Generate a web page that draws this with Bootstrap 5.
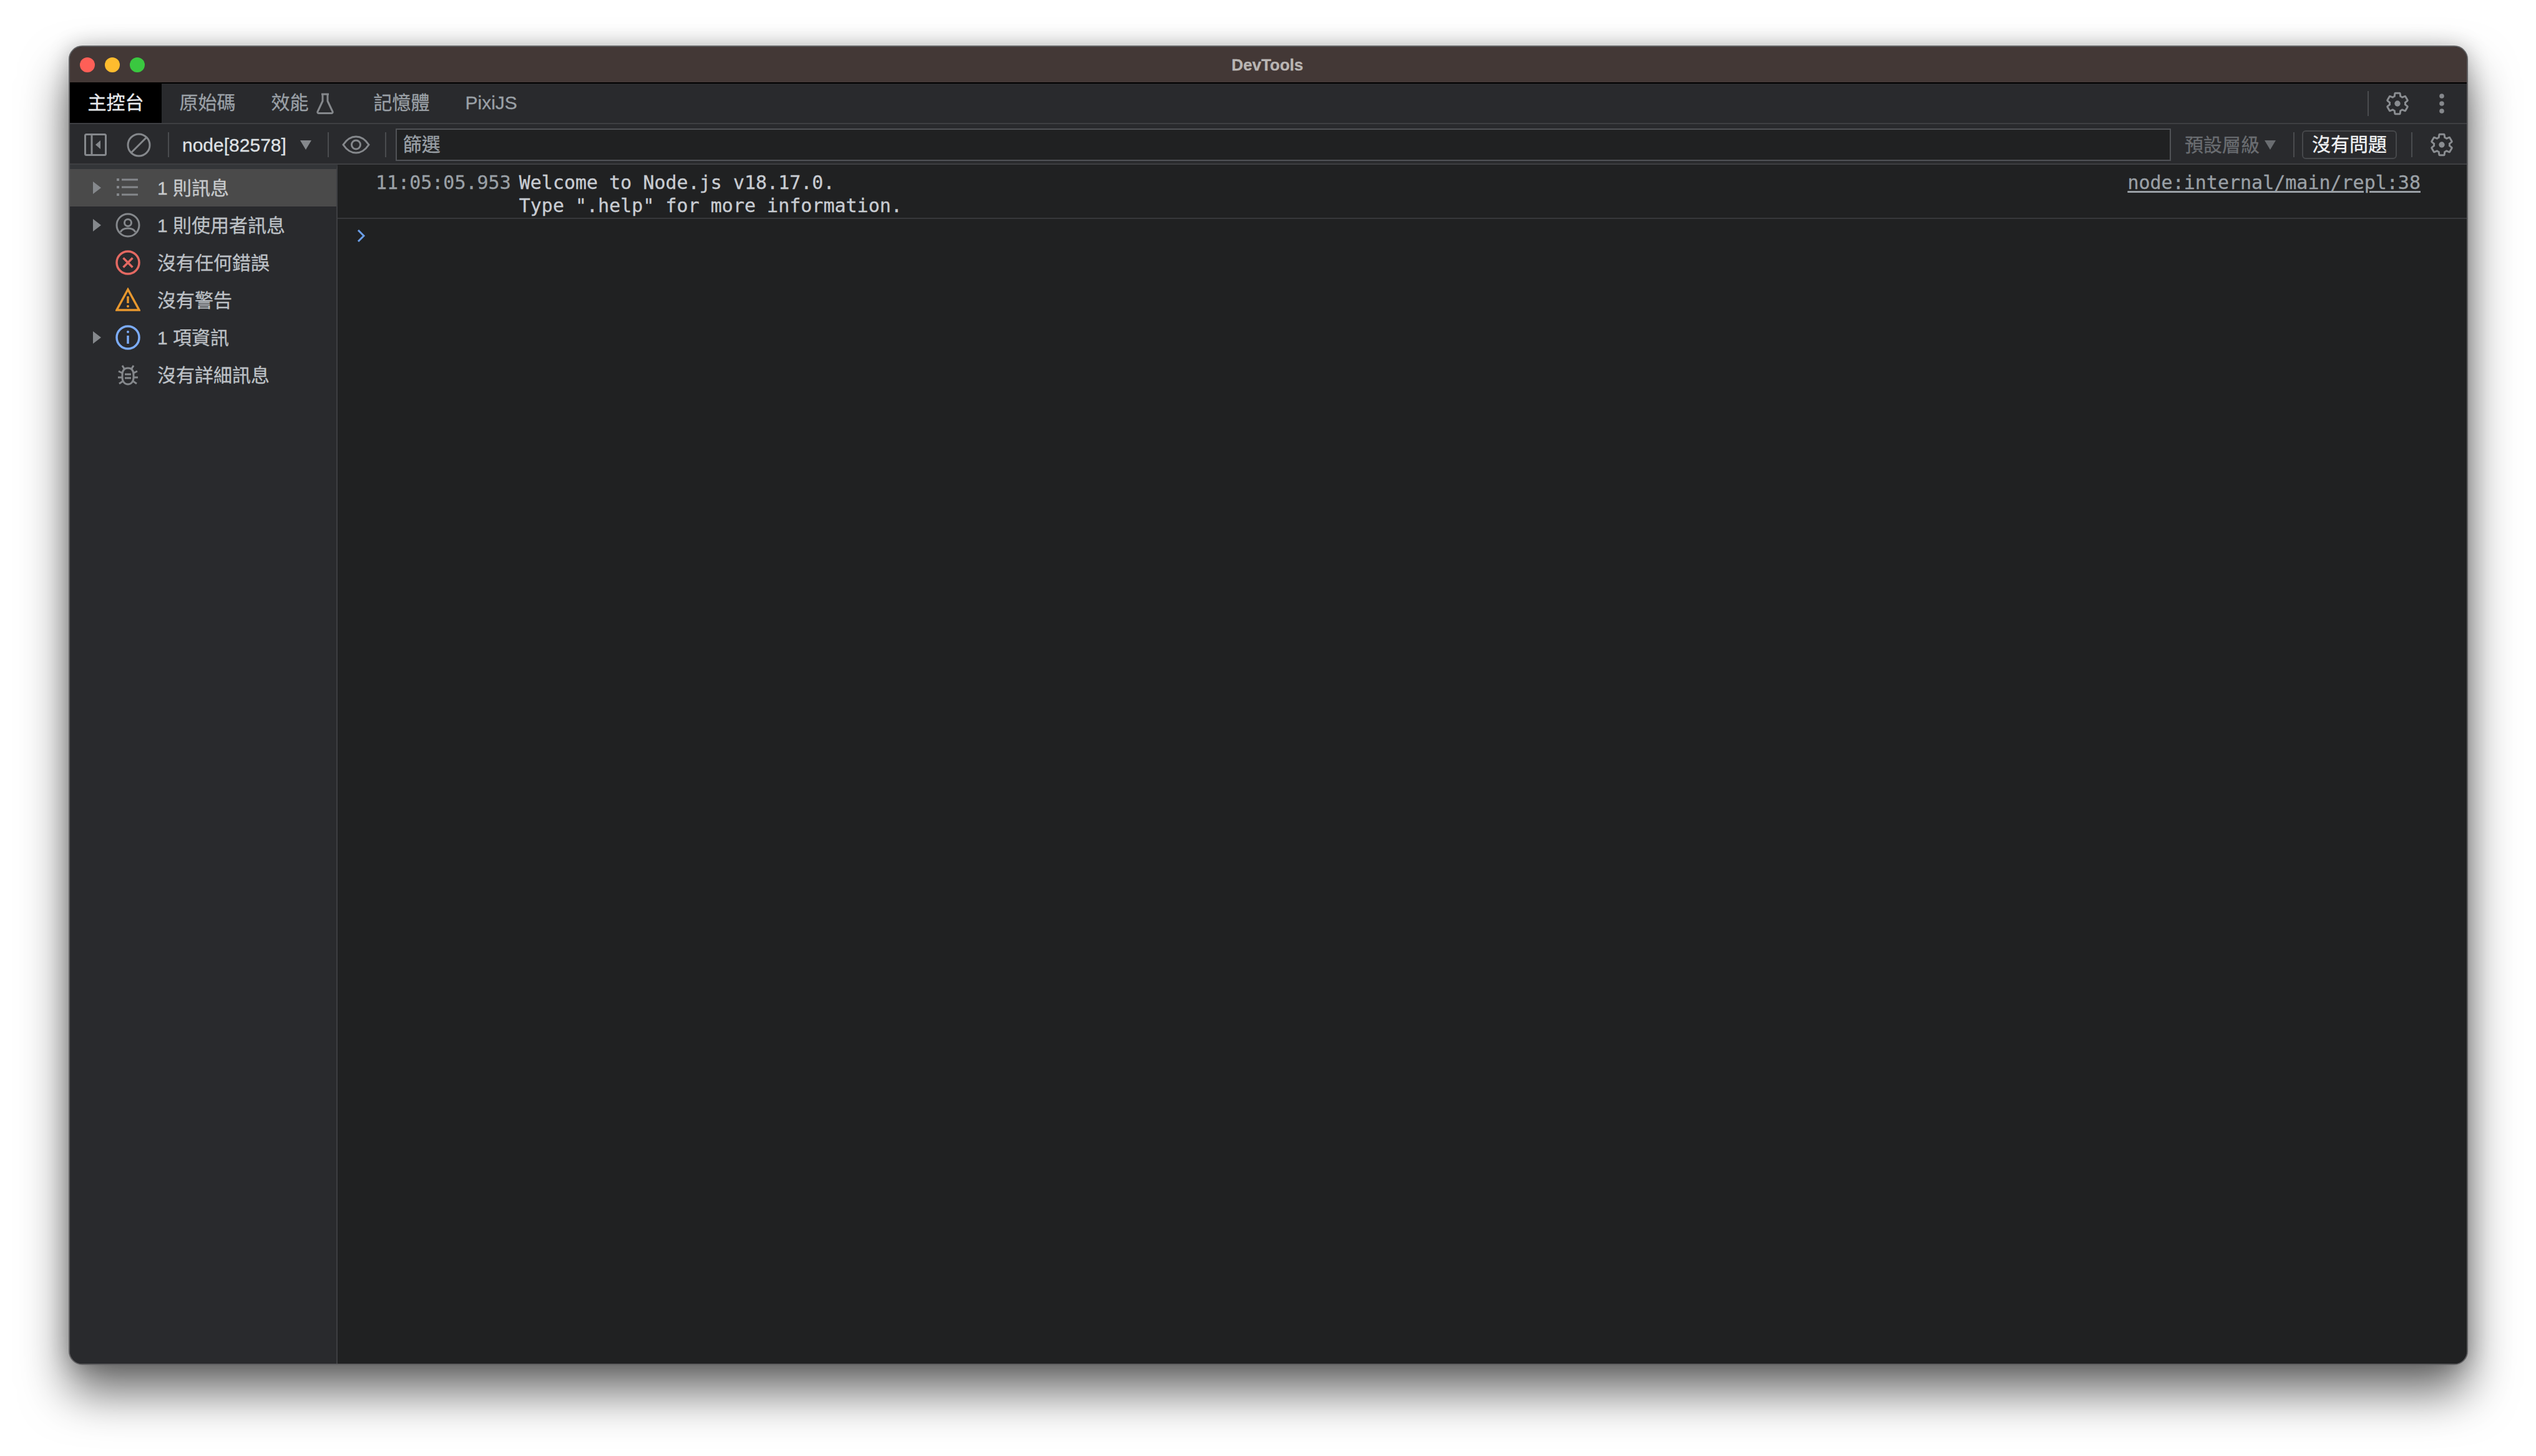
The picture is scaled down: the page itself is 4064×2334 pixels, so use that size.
<!DOCTYPE html>
<html lang="zh-Hant">
<head>
<meta charset="utf-8">
<title>DevTools</title>
<link rel="stylesheet" href="https://cdn.jsdelivr.net/npm/bootstrap@5.3.0/dist/css/bootstrap.min.css">
<style>
html,body{height:100%;background:#fff;overflow:hidden}
body{font-family:"Liberation Sans","Noto Sans CJK TC",sans-serif;font-size:30px;color:#bdc1c6;-webkit-text-stroke:.3px currentColor}
.dt-window{margin:73px 109px 0 110px;height:2115px;border:2px solid #5f5f61;border-radius:22px;background:#292a2d;overflow:hidden;box-shadow:0 44px 76px rgba(0,0,0,.58),0 0 34px rgba(0,0,0,.22)}
.dt-title{height:57px;background:#433836;position:relative}
.dt-title-text{font-size:26px;font-weight:700;color:#b9b5b3;line-height:1;margin-right:3px}
.light{width:24px;height:24px;border-radius:50%}
.light-r{background:#fe5f57}.light-y{background:#febc2e}.light-g{background:#3ac840}
.lights{margin-left:16px;gap:16px}
.dt-tabs{height:67px;background:#292a2d;border-top:2px solid #000;border-bottom:2px solid #3e3f42}
.dt-tabs .nav-link{padding:0 28.5px 3px;color:#9aa0a6;height:100%;display:flex;align-items:center;border-radius:0;font-size:30px}
.dt-tabs .nav-link.active{background:#000;color:#e8eaed}
.flask{width:28px;height:34px;margin:3px 7px 0 12px}
.dt-bar{height:65px;padding-top:3px;background:#292a2d;border-bottom:2px solid #3e3f42}
.vsep{width:2px;height:40px;background:#4a4c4f;flex:none}
.ic-dock{width:36px;height:36px;margin-left:23px}
.ic-block{width:39px;height:39px;margin-left:32px}
.s1{margin-left:27px}
.target{margin-left:21px;color:#dfe1e4;font-size:30px;white-space:nowrap}
.arrow{width:18px;height:15px;margin-left:22px;flex:none;color:#85888c}
.s2{margin-left:26px}
.ic-eye{width:45px;height:30px;margin-left:21px}
.s3{margin-left:24px}
.dt-bar .form-control.filter{flex:1 1 auto;width:auto;height:52px;margin:-1px 0 0 15px;border:2px solid #505256;border-radius:0;background:#202122;color:#9aa0a6;font-size:30px;padding:0 10px;box-shadow:none}
.filter::placeholder{color:#9aa0a6;opacity:1}
.levels{margin-left:22px;color:#6a6d71;white-space:nowrap}
.arrow-l{margin-left:8px;color:#6a6d71}
.s4{margin-left:28px}
.dt-bar .btn.issues{margin-left:12px;height:46px;width:152px;padding:0;border:2px solid #46484b;border-radius:6px;color:#f1f3f4;font-size:30px;line-height:1;background:transparent;white-space:nowrap}
.s5{margin-left:23px}
.ic-gear{width:40px;height:40px;margin-left:27px;flex:none;color:#8a8d91}
.ic-gear-r{margin-right:20px}
.tabs-right{margin-left:auto}
.ic-dots{width:10px;height:32px;margin-left:46px;margin-right:35px}
.ic-gear-t{margin-left:26px}
.dt-body{height:1922px}
.dt-side{width:429px;flex:none;background:#292a2d;border-right:2px solid #3e3f42;border-top:7px solid #333538}
.dt-side .list-group-item{height:60px;padding:0;border:0;background:transparent;color:#bdc1c6;display:flex;align-items:center;font-size:30px;white-space:nowrap}
.dt-side .list-group-item.active{background:#4a4a4a;color:#c8cacd}
.tri{width:13px;height:20px;margin-left:37px;flex:none}
.tri-off{visibility:hidden}
.sic{width:40px;height:40px;margin-left:23px;flex:none}
.slabel{margin-left:27px}
.dt-main{background:#202122;font-family:"DejaVu Sans Mono","Noto Sans CJK TC",monospace;font-size:30px;line-height:36.5px}
.msg{border-bottom:2px solid #37383b;padding:11px 74px 1px 61px;height:87px}
.msg-time{color:#9aa0a6;margin-right:13px;flex:none}
.msg-text{color:#c8ccd2;white-space:pre;flex:1 1 auto}
.msg-link{color:#9aa0a6;text-decoration:underline;text-underline-offset:3px}
.prompt{width:14px;height:20px;margin:17px 0 0 31px;display:block}
</style>
</head>
<body>
<svg width="0" height="0" class="d-none">
<symbol id="gear" viewBox="0 0 24 24"><path fill="none" stroke="currentColor" stroke-width="1.800" d="M19.43 12.98c.04-.32.07-.64.07-.98s-.03-.66-.07-.98l2.11-1.65c.19-.15.24-.42.12-.64l-2-3.46c-.12-.22-.39-.3-.61-.22l-2.49 1c-.52-.4-1.08-.73-1.69-.98l-.38-2.65C14.46 2.18 14.25 2 14 2h-4c-.25 0-.46.18-.49.42l-.38 2.65c-.61.25-1.17.59-1.69.98l-2.49-1c-.23-.09-.49 0-.61.22l-2 3.46c-.13.22-.07.49.12.64l2.11 1.65c-.04.32-.07.65-.07.98s.03.66.07.98l-2.11 1.65c-.19.15-.24.42-.12.64l2 3.46c.12.22.39.3.61.22l2.49-1c.52.4 1.08.73 1.69.98l.38 2.65c.03.24.24.42.49.42h4c.25 0 .46-.18.49-.42l.38-2.65c.61-.25 1.17-.59 1.69-.98l2.49 1c.23.09.49 0 .61-.22l2-3.46c.12-.22.07-.49-.12-.64z"/><circle cx="12" cy="12" r="2.800" fill="currentColor"/></symbol>
<symbol id="tri" viewBox="0 0 13 20"><path fill="#85888c" d="M0 0l13 10L0 20z"/></symbol>
<symbol id="down" viewBox="0 0 18 15"><path fill="currentColor" d="M0 0h18L9 15z"/></symbol>
</svg>

<div class="dt-window d-flex flex-column">
  <div class="dt-title d-flex align-items-center justify-content-center">
    <div class="lights d-flex position-absolute start-0">
      <span class="light light-r"></span><span class="light light-y"></span><span class="light light-g"></span>
    </div>
    <span class="dt-title-text">DevTools</span>
  </div>

  <div class="dt-tabs d-flex align-items-center">
    <ul class="nav h-100 flex-nowrap">
      <li class="nav-item"><a class="nav-link active" href="#">主控台</a></li>
      <li class="nav-item"><a class="nav-link" href="#">原始碼</a></li>
      <li class="nav-item"><a class="nav-link" href="#">效能<svg class="flask" viewBox="0 0 28 34"><path fill="none" stroke="#85888c" stroke-width="3" stroke-linejoin="round" d="M8 2h12M10 2v11L2 30c-.5 1.5.3 2.5 2 2.5h20c1.700 0 2.500-1 2-2.500L18 13V2"/></svg></a></li>
      <li class="nav-item"><a class="nav-link" href="#">記憶體</a></li>
      <li class="nav-item"><a class="nav-link" href="#">PixiJS</a></li>
    </ul>
    <div class="tabs-right d-flex align-items-center">
      <span class="vsep"></span>
      <svg class="ic-gear ic-gear-t"><use href="#gear"/></svg>
      <svg class="ic-dots" viewBox="0 0 10 32"><circle cx="5" cy="4" r="3.800" fill="#85888c"/><circle cx="5" cy="16" r="3.800" fill="#85888c"/><circle cx="5" cy="28" r="3.800" fill="#85888c"/></svg>
    </div>
  </div>

  <div class="dt-bar d-flex align-items-center">
    <svg class="ic-dock" viewBox="0 0 36 36" fill="none"><rect x="1.500" y="1.500" width="33" height="33" rx="2" stroke="#85888c" stroke-width="3"/><path d="M12 2v32" stroke="#85888c" stroke-width="3"/><path d="M26 11v14l-8-7z" fill="#85888c"/></svg>
    <svg class="ic-block" viewBox="0 0 39 39" fill="none"><circle cx="19.500" cy="19.500" r="17.500" stroke="#85888c" stroke-width="3"/><path d="M7 32L32 7" stroke="#85888c" stroke-width="3"/></svg>
    <span class="vsep s1"></span>
    <span class="target">node[82578]</span>
    <svg class="arrow"><use href="#down"/></svg>
    <span class="vsep s2"></span>
    <svg class="ic-eye" viewBox="0 0 45 30" fill="none"><path d="M2 15C8 6 15 2 22.500 2S37 6 43 15c-6 9-13 13-20.500 13S8 24 2 15z" stroke="#85888c" stroke-width="3"/><circle cx="22.500" cy="15" r="7" stroke="#85888c" stroke-width="3"/></svg>
    <span class="vsep s3"></span>
    <input class="form-control filter" type="text" placeholder="篩選">
    <span class="levels">預設層級</span>
    <svg class="arrow arrow-l"><use href="#down"/></svg>
    <span class="vsep s4"></span>
    <button class="btn issues" type="button">沒有問題</button>
    <span class="vsep s5"></span>
    <svg class="ic-gear ic-gear-r"><use href="#gear"/></svg>
  </div>

  <div class="dt-body d-flex flex-grow-1">
    <div class="dt-side list-group list-group-flush rounded-0">
      <div class="list-group-item active">
        <svg class="tri"><use href="#tri"/></svg>
        <svg class="sic" viewBox="0 0 40 40"><g fill="none" stroke="#85888c" stroke-width="3"><path d="M10 7h26M10 19h26M10 31h26"/></g><g fill="#85888c"><rect x="2" y="5" width="4" height="4"/><rect x="2" y="17" width="4" height="4"/><rect x="2" y="29" width="4" height="4"/></g></svg>
        <span class="slabel">1 則訊息</span>
      </div>
      <div class="list-group-item">
        <svg class="tri"><use href="#tri"/></svg>
        <svg class="sic" viewBox="0 0 40 40" fill="none" stroke="#85888c" stroke-width="3"><circle cx="20" cy="20" r="18"/><circle cx="20" cy="16" r="5.500"/><path d="M8 31c2-4 6-6 12-6s10 2 12 6"/></svg>
        <span class="slabel">1 則使用者訊息</span>
      </div>
      <div class="list-group-item">
        <svg class="tri tri-off"><use href="#tri"/></svg>
        <svg class="sic" viewBox="0 0 40 40" fill="none" stroke="#e46962" stroke-width="3.500"><circle cx="20" cy="20" r="18"/><path d="M12.500 12.500l15 15M27.500 12.500l-15 15"/></svg>
        <span class="slabel">沒有任何錯誤</span>
      </div>
      <div class="list-group-item">
        <svg class="tri tri-off"><use href="#tri"/></svg>
        <svg class="sic" viewBox="0 0 40 40" fill="none"><path d="M20 3L2 36h36z" stroke="#e8982e" stroke-width="3.500" stroke-linejoin="miter"/><path d="M20 14v11" stroke="#e8982e" stroke-width="3.500"/><circle cx="20" cy="30" r="2" fill="#e8982e"/></svg>
        <span class="slabel">沒有警告</span>
      </div>
      <div class="list-group-item">
        <svg class="tri"><use href="#tri"/></svg>
        <svg class="sic" viewBox="0 0 40 40" fill="none"><circle cx="20" cy="20" r="18" stroke="#7cacf8" stroke-width="3.500"/><path d="M20 17v13" stroke="#7cacf8" stroke-width="3.500"/><circle cx="20" cy="11" r="2" fill="#7cacf8"/></svg>
        <span class="slabel">1 項資訊</span>
      </div>
      <div class="list-group-item">
        <svg class="tri tri-off"><use href="#tri"/></svg>
        <svg class="sic" viewBox="0 0 40 40" fill="none" stroke="#85888c" stroke-width="3"><path d="M20 9c-6 0-9 4-9 11v4c0 7 4 11 9 11s9-4 9-11v-4c0-7-3-11-9-11z"/><path d="M14 10l-3-5M26 10l3-5M11 17l-6-3M29 17l6-3M11 24H4M29 24h7M12 30l-6 4M28 30l6 4M15 19h10M15 25h10"/></svg>
        <span class="slabel">沒有詳細訊息</span>
      </div>
    </div>
    <div class="dt-main flex-grow-1">
      <div class="msg d-flex">
        <span class="msg-time">11:05:05.953</span>
        <span class="msg-text">Welcome to Node.js v18.17.0.
Type ".help" for more information.</span>
        <a class="msg-link" href="#">node:internal/main/repl:38</a>
      </div>
      <svg class="prompt" viewBox="0 0 14 20" fill="none"><path d="M2 1l9 9-9 9" stroke="#6b9ee8" stroke-width="3"/></svg>
    </div>
  </div>
</div>
</body>
</html>
